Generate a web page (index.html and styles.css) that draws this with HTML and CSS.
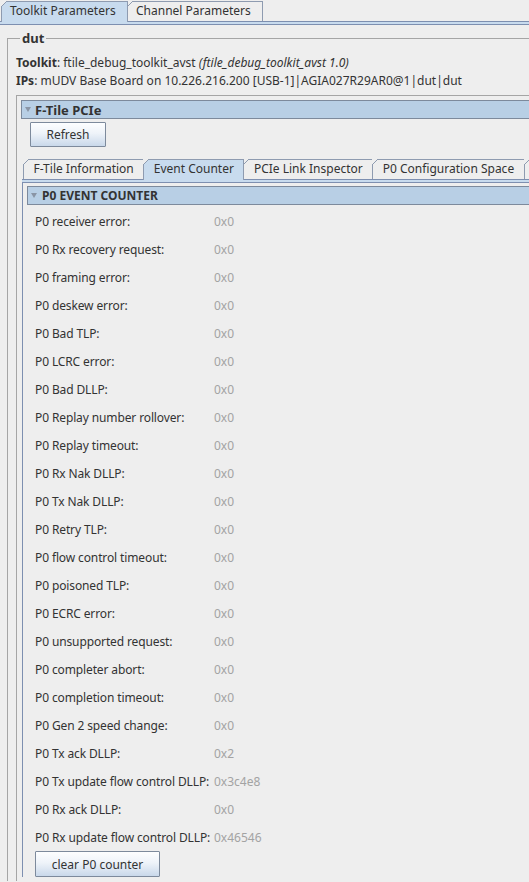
FILE: index.html
```html
<!DOCTYPE html>
<html>
<head>
<meta charset="utf-8">
<link rel="stylesheet" href="styles.css">
</head>
<body>
<div class="tabbar top">
  <div class="tab sel">Toolkit Parameters</div>
  <div class="tab">Channel Parameters</div>
</div>
<div class="strip top-strip"></div>
<div class="page">
  <fieldset class="group">
    <legend>dut</legend>
    <div class="info first"><b>Toolkit</b>: ftile_debug_toolkit_avst <i>(ftile_debug_toolkit_avst 1.0)</i></div>
    <div class="info"><b>IPs</b>: mUDV Base Board on 10.226.216.200 [USB-1]|AGIA027R29AR0@1|dut|dut</div>
    <div class="panel">
      <div class="hdr hdr-main"><span class="tri"></span>F-Tile PCIe</div>
      <div class="btnrow"><button class="btn refresh">Refresh</button></div>
      <div class="subtabs">
        <div class="tabbar inner">
          <div class="tab">F-Tile Information</div>
          <div class="tab sel">Event Counter</div>
          <div class="tab">PCIe Link Inspector</div>
          <div class="tab">P0 Configuration Space</div>
          <div class="tab stub"></div>
        </div>
        <div class="strip"></div>
        <div class="tabcontent">
          <div class="hdr hdr-sub"><span class="tri"></span>P0 EVENT COUNTER</div>
          <div class="rows">
            <div class="lbl">P0 receiver error:</div><div class="val">0x0</div>
            <div class="lbl">P0 Rx recovery request:</div><div class="val">0x0</div>
            <div class="lbl">P0 framing error:</div><div class="val">0x0</div>
            <div class="lbl">P0 deskew error:</div><div class="val">0x0</div>
            <div class="lbl">P0 Bad TLP:</div><div class="val">0x0</div>
            <div class="lbl">P0 LCRC error:</div><div class="val">0x0</div>
            <div class="lbl">P0 Bad DLLP:</div><div class="val">0x0</div>
            <div class="lbl">P0 Replay number rollover:</div><div class="val">0x0</div>
            <div class="lbl">P0 Replay timeout:</div><div class="val">0x0</div>
            <div class="lbl">P0 Rx Nak DLLP:</div><div class="val">0x0</div>
            <div class="lbl">P0 Tx Nak DLLP:</div><div class="val">0x0</div>
            <div class="lbl">P0 Retry TLP:</div><div class="val">0x0</div>
            <div class="lbl">P0 flow control timeout:</div><div class="val">0x0</div>
            <div class="lbl">P0 poisoned TLP:</div><div class="val">0x0</div>
            <div class="lbl">P0 ECRC error:</div><div class="val">0x0</div>
            <div class="lbl">P0 unsupported request:</div><div class="val">0x0</div>
            <div class="lbl">P0 completer abort:</div><div class="val">0x0</div>
            <div class="lbl">P0 completion timeout:</div><div class="val">0x0</div>
            <div class="lbl">P0 Gen 2 speed change:</div><div class="val">0x0</div>
            <div class="lbl">P0 Tx ack DLLP:</div><div class="val">0x2</div>
            <div class="lbl">P0 Tx update flow control DLLP:</div><div class="val">0x3c4e8</div>
            <div class="lbl">P0 Rx ack DLLP:</div><div class="val">0x0</div>
            <div class="lbl">P0 Rx update flow control DLLP:</div><div class="val">0x46546</div>
          </div>
          <button class="btn clear">clear P0 counter</button>
        </div>
      </div>
    </div>
  </fieldset>
</div>
</body>
</html>
```
FILE: styles.css
```css
html, body {
  margin: 0;
  padding: 0;
  background: #eeeeee;
  overflow: hidden;
}
body {
  width: 529px;
  height: 882px;
  font-family: "Noto Sans", "Open Sans", sans-serif;
  font-size: 12px;
  color: #333333;
}
.tabbar {
  display: flex;
  align-items: flex-end;
  height: 20px;
  white-space: nowrap;
}
.tabbar.top {
  padding: 1px 0 0 1px;
}
.tab {
  position: relative;
  box-sizing: border-box;
  height: 20px;
  line-height: 18px;
  padding: 0 8px 0 8px;
  border: 1px solid #8e9bb0;
  border-bottom: none;
  margin-right: -1px;
  background: #eeeeee;
  color: #333333;
}
.tab::before {
  content: "";
  position: absolute;
  left: -1px;
  top: -1px;
  width: 6px;
  height: 6px;
  background: linear-gradient(to bottom right, #eeeeee 0, #eeeeee calc(50% - 0.6px), #8e9bb0 calc(50% - 0.6px), #8e9bb0 calc(50% + 0.6px), transparent calc(50% + 0.6px));
}
.tab.sel {
  background: #c8dbee;
  height: 21px;
  margin-bottom: -1px;
  z-index: 1;
}
.tabbar.top .tab.sel {
  width: 127px;
}
.tabbar.top .tab {
  width: 136px;
  padding-left: 8px;
}
.strip {
  height: 2px;
  border-top: 1px solid #7d8fb0;
  border-bottom: 1px solid #7d8fb0;
  background: #c8dbee;
}
.top-strip {
  width: 640px;
}
.page {
  width: 640px;
  padding-left: 7px;
}
.group {
  margin: 4px 0 0 0;
  padding: 0 0 0 8px;
  border: 1px solid #a5a5a5;
  border-right: none;
  border-bottom: none;
  min-width: 0;
}
.group legend {
  font-weight: bold;
  font-size: 13px;
  line-height: 18px;
  padding: 0 2px;
  margin-left: 4px;
  color: #333333;
}
.info {
  line-height: 18px;
  white-space: nowrap;
}
.info.first {
  margin-top: 7px;
}
.info i {
  font-style: italic;
}
.panel {
  margin: 5px 0 0 0;
  border: 1px solid #a5a5a5;
  border-right: none;
  border-bottom: none;
  padding: 4px 0 4px 4px;
}
.hdr {
  box-sizing: border-box;
  display: flex;
  align-items: center;
  border: 1px solid #7d8a9c;
  border-right: none;
  background: #b8cfe5;
  font-weight: bold;
  color: #333333;
  white-space: nowrap;
}
.hdr-main {
  height: 19px;
  font-size: 13px;
  padding-left: 3px;
}
.hdr-main .tri {
  margin-right: 4px;
}
.hdr-sub {
  height: 19px;
  font-size: 12px;
  padding-left: 3px;
}
.hdr-sub .tri {
  margin-right: 5px;
}
.tri {
  width: 0;
  height: 0;
  border-left: 3.5px solid transparent;
  border-right: 3.5px solid transparent;
  border-top: 5px solid #8a95a5;
}
.btnrow {
  padding: 3px 0 0 9px;
}
.btn {
  box-sizing: border-box;
  font-family: "Noto Sans", "Open Sans", sans-serif;
  font-size: 12px;
  color: #333333;
  border: 1px solid #7d8a9c;
  border-radius: 1px;
  background: linear-gradient(to bottom, #fdfeff 0%, #eef3f9 45%, #c9d8ea 100%);
  padding: 0;
  margin: 0;
}
.refresh {
  width: 76px;
  height: 25px;
}
.subtabs {
  margin: 12px 0 0 1px;
}
.tabbar.inner {
  padding-left: 1px;
}
.tabbar.inner .tab {
  padding: 0 9.5px;
}
.tabbar.inner .tab.stub {
  width: 30px;
}
.tabcontent {
  border-left: 1px solid #7d8fb0;
  padding: 3px 0 0 4px;
}
.rows {
  display: grid;
  grid-template-columns: 179px auto;
  grid-auto-rows: 28px;
  align-items: center;
  padding: 2px 0 0 8px;
}
.lbl {
  white-space: nowrap;
  color: #333333;
  letter-spacing: -0.12px;
}
.val {
  color: #a3a3a3;
}
.clear {
  width: 125px;
  height: 26px;
  margin: 0 0 0 8px;
}
```
